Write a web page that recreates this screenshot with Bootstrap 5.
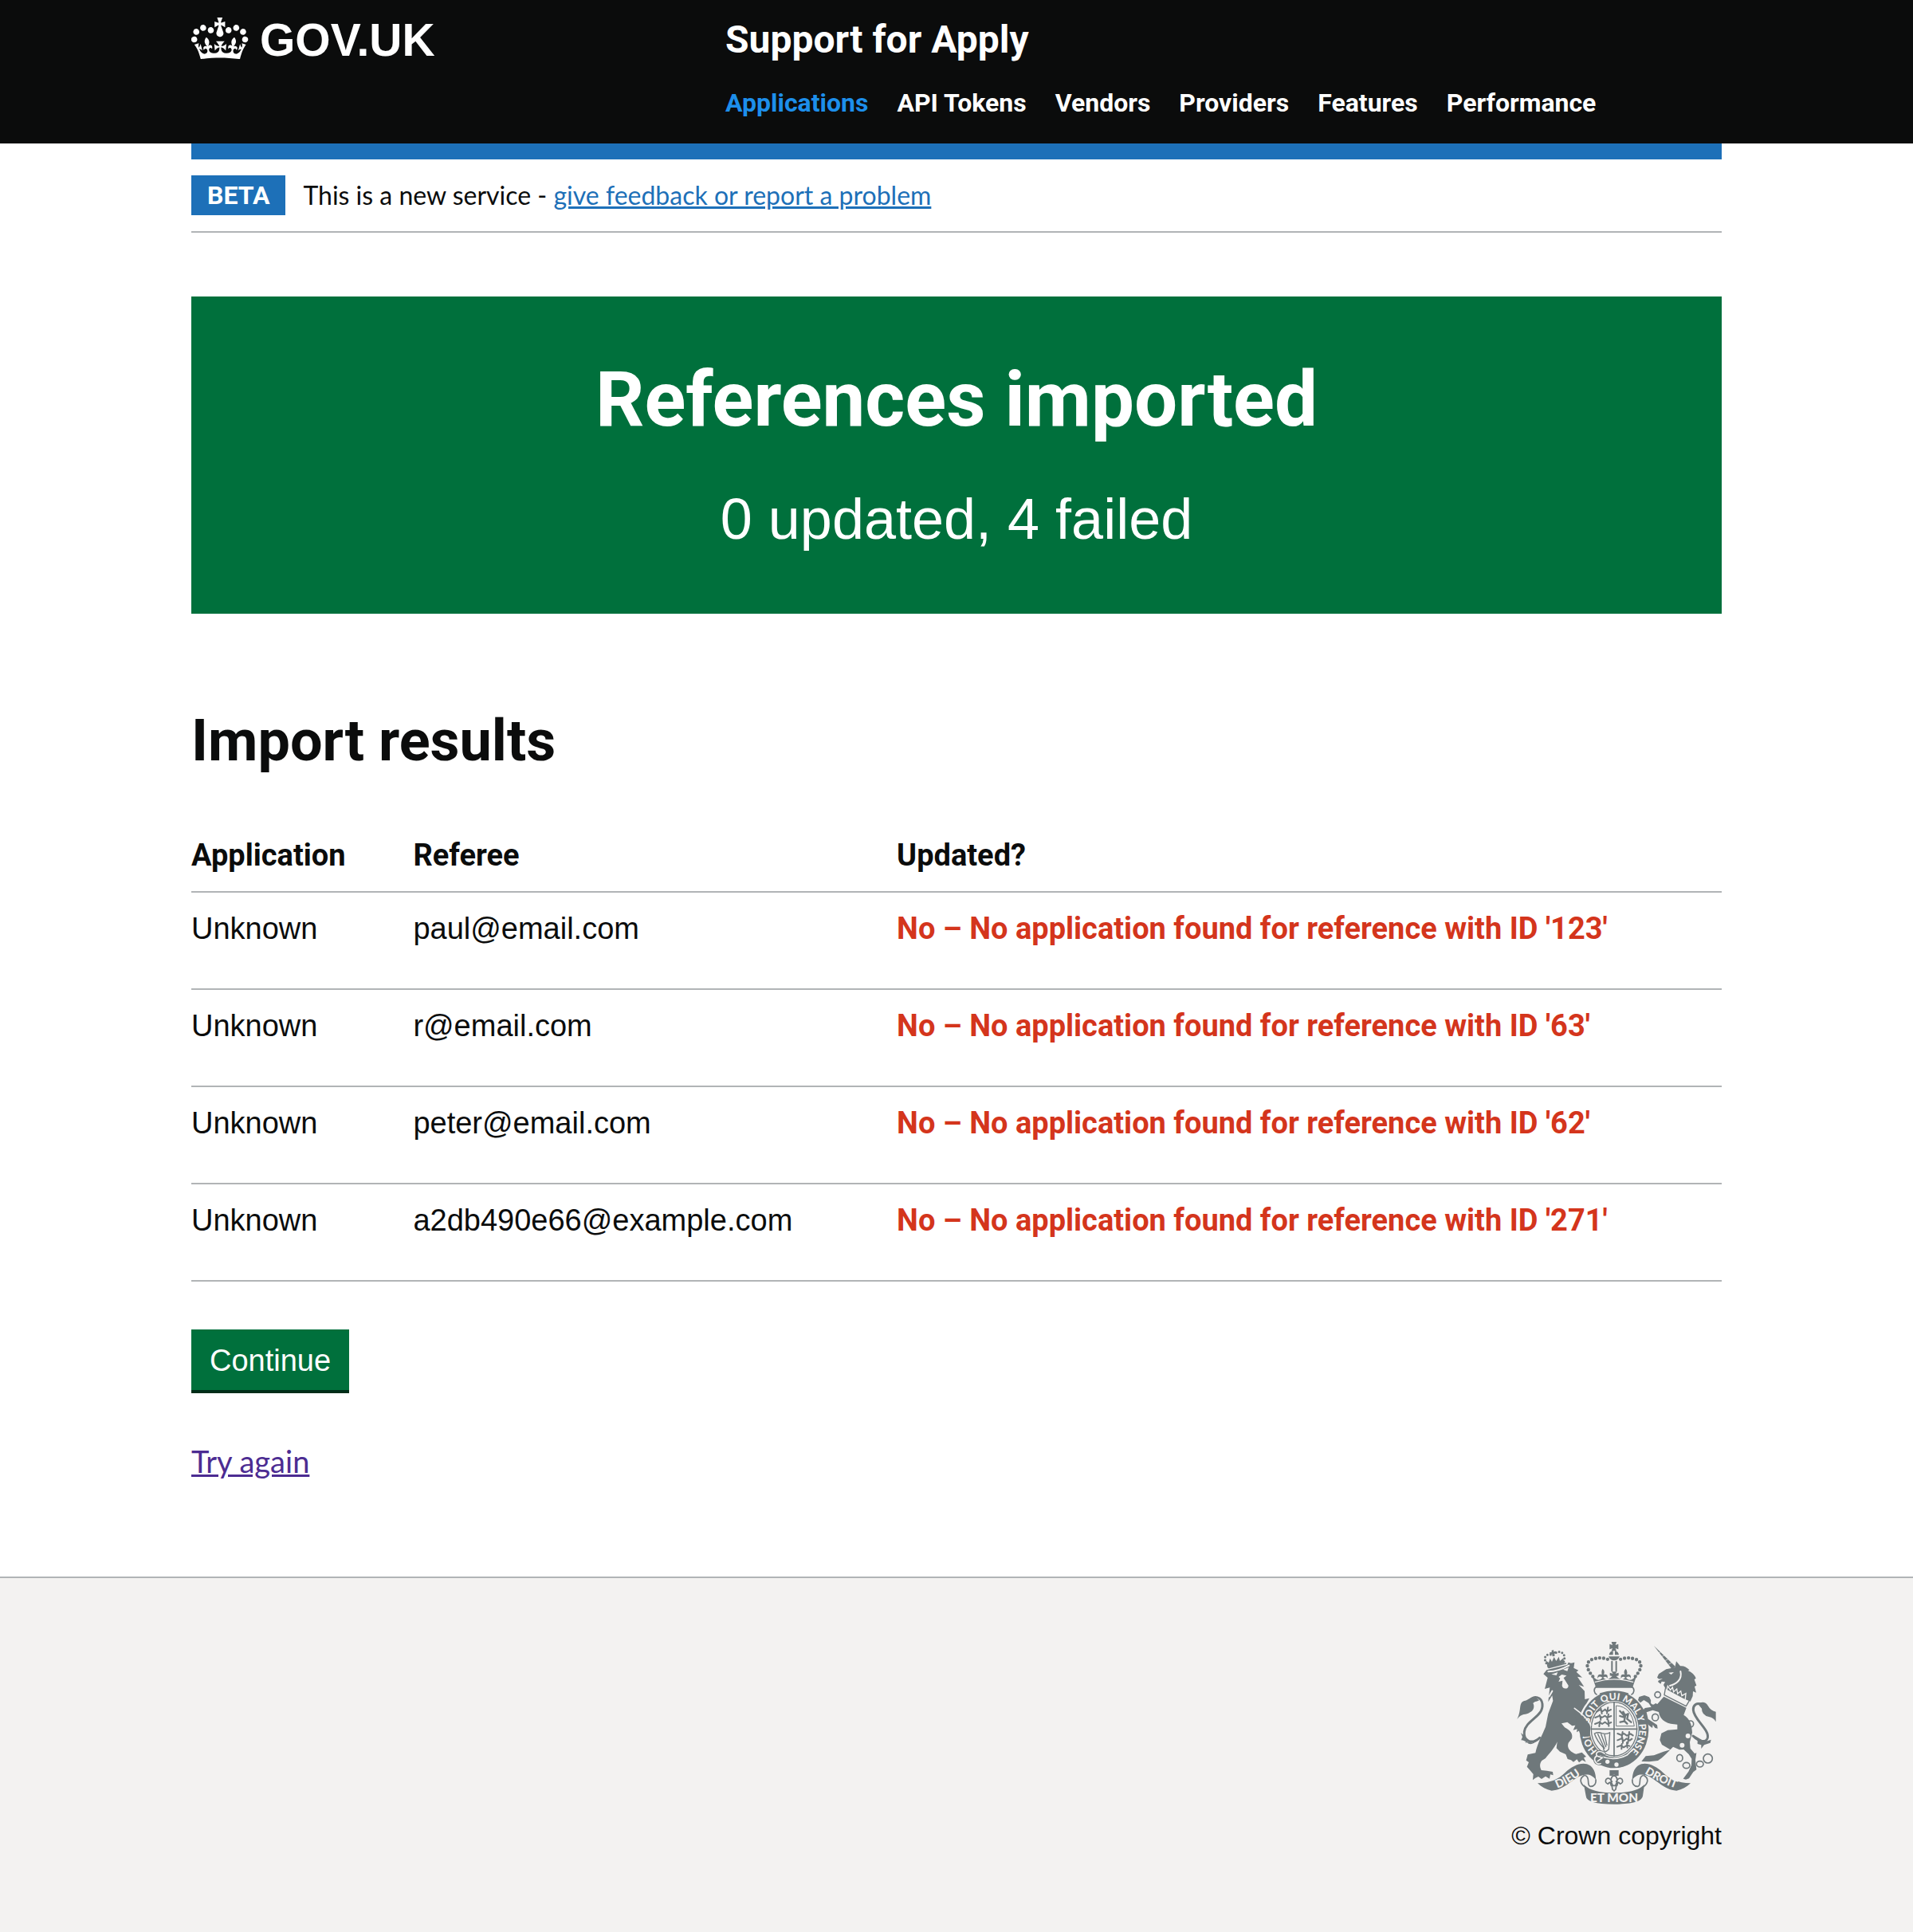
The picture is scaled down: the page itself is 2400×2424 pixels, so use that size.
<!DOCTYPE html>
<html lang="en">
<head>
<meta charset="utf-8">
<meta name="viewport" content="width=device-width, initial-scale=1">
<title>References imported - Support for Apply</title>
<link href="https://cdn.jsdelivr.net/npm/bootstrap@5.3.0/dist/css/bootstrap.min.css" rel="stylesheet">
<style>
  :root { --ink:#0b0c0c; --blue:#1d70b8; --green:#00703c; --line:#b1b4b6; --crest:#6f787b; --paper:#f3f2f1; }
  body { font-family:"Liberation Sans",Arial,sans-serif; font-size:38px; line-height:50px; color:var(--ink); background:#fff; }
  h1, h2, th, .strong-text { font-family:Roboto,"Liberation Sans",sans-serif; font-weight:700; }
  .page-width { width:100%; max-width:1920px; margin-left:auto; margin-right:auto; }
  .site-header { background:var(--ink); padding:22px 0 31px; }
  .brand { gap:14px; color:#fff; font-size:57px; line-height:56px; font-weight:700; }
  .brand svg { width:72px; height:52px; fill:#fff; }
  .service-area { padding-left:30px; }
  .service-name { color:#fff; font-size:48px; line-height:56px; }
  .service-nav { margin-top:31px; column-gap:36px; font-size:32px; line-height:40px; }
  .service-nav a { color:#fff; }
  .service-nav a.active { color:#1d8feb; }
  .phase-banner { border-top:20px solid var(--blue); border-bottom:2px solid var(--line); padding:20px 0; gap:22px; font-family:Lato,"Liberation Sans",sans-serif; font-size:32px; line-height:50px; }
  .phase-tag { background:var(--blue); color:#fff; padding:0 20px; }
  .phase-banner a { color:var(--blue); }
  .result-panel { background:var(--green); margin-top:80px; padding:79px 40px; }
  .result-panel h1 { font-size:96px; line-height:100px; margin-bottom:60px; }
  .result-panel p { font-size:72px; line-height:80px; }
  .results-title { font-size:72px; line-height:80px; margin:120px 0 58px; }
  .results { --bs-table-bg:transparent; --bs-table-color:var(--ink); color:var(--ink); border-color:var(--line); margin-bottom:60px; table-layout:fixed; }
  .results th, .results td { border-bottom:2px solid var(--line); padding:20px 20px 20px 0; }
  .results td { padding-bottom:50px; }
  .results .col-app { width:14.5%; }
  .results .col-ref { width:31.6%; }
  .results td.failed { color:#d4351c; }
  .btn-continue { background:var(--green); color:#fff; border:0; border-radius:0; box-shadow:0 4px 0 #002d18; font-size:38px; line-height:38px; padding:20px 23px 18px; }
  .btn-continue:hover { background:#005a30; color:#fff; }
  .retry { margin:64px 0 120px; font-family:Lato,"Liberation Sans",sans-serif; }
  .retry a { color:#4c2c92; }
  .site-footer { background:var(--paper); border-top:2px solid var(--line); padding:80px 0 96px; }
  .copyright { color:var(--ink); font-size:32px; line-height:50px; gap:14px; }
  .copyright svg { width:250px; height:204px; }
  .crest-fill { fill:var(--crest); }
  .crest-line { fill:none; stroke:var(--crest); stroke-linecap:round; stroke-linejoin:round; }
  .gap-fill { fill:var(--paper); }
  .gap-line { fill:none; stroke:var(--paper); stroke-linecap:round; }
  .motto { fill:var(--paper); font-family:Lato,"Liberation Sans",sans-serif; font-weight:900; }
</style>
</head>
<body class="d-flex flex-column min-vh-100">

<header class="site-header">
  <div class="page-width">
    <div class="row g-0">
      <div class="col-4">
        <a href="#" class="brand d-inline-flex align-items-start text-decoration-none">
          <svg viewBox="0 4 36 26" aria-hidden="true"><path d="M6.7 12.2c1 .4 2.1-.1 2.5-1s-.1-2.1-1-2.5c-1-.4-2.1.1-2.5 1-.4 1 0 2.1 1 2.5m-4.3 2.5c1 .4 2.1-.1 2.5-1s-.1-2.1-1-2.5c-1-.4-2.1.1-2.5 1-.5 1 0 2.1 1 2.5m-1.3 4.8c1 .4 2.1-.1 2.5-1 .4-1-.1-2.1-1-2.5-1-.4-2.1.1-2.5 1-.4 1 0 2.1 1 2.5m10.4-5.8c1 .4 2.1-.1 2.5-1s-.1-2.1-1-2.5c-1-.4-2.1.1-2.5 1s0 2.1 1 2.5m17.4-1.5c-1 .4-2.1-.1-2.5-1s.1-2.1 1-2.5c1-.4 2.1.1 2.5 1 .5 1 0 2.1-1 2.5m4.3 2.5c-1 .4-2.1-.1-2.5-1s.1-2.1 1-2.5c1-.4 2.1.1 2.5 1 .5 1 0 2.1-1 2.5m1.3 4.8c-1 .4-2.1-.1-2.5-1-.4-1 .1-2.1 1-2.5 1-.4 2.1.1 2.5 1 .4 1 0 2.1-1 2.5m-10.4-5.8c-1 .4-2.1-.1-2.5-1s.1-2.1 1-2.5c1-.4 2.1.1 2.5 1s0 2.1-1 2.5m-5.3-4.9 2.4 1.3V6.5l-2.4.8c-.1-.1-.1-.2-.2-.3s1-3 1-3h-3.4l1 3c-.1.1-.2.2-.2.3-.1.1-2.4-.8-2.4-.8v3.6l2.4-1.3c.1.1.1.2.2.3l-1.4 4.2c-.1.2-.1.4-.1.6 0 1.1.8 2 1.9 2.2h.7c1-.2 1.9-1.1 1.9-2.1 0-.2 0-.4-.1-.6l-1.4-4.2c-.1-.1-.1-.2 0-.3m-1 20.3c4.6 0 8.9.3 12.8.9 1.1-4.6 2.4-7.2 3.8-9.1l-2.6-.9c.3 1.3.3 1.9 0 2.8-.4-.4-.8-1.2-1.1-2.4l-1.2 4.2c.8-.5 1.4-.9 2-.9-1.2 2.6-2.7 3.2-3.6 3-1.2-.2-1.7-1.3-1.5-2.2.3-1.3 1.6-1.6 2.2-.1 1.2-2.4-.8-3.1-2.1-2.4 1.9-1.9 2.2-3.6.6-5.7-2.2 1.7-2.2 3.3-1.2 5.6-1.3-1.5-3.3-.7-2.5 1.7.9-1.4 2.1-.5 2 .8-.2 1.2-1.7 2.1-3.7 1.9-2.8-.2-2.9-2.1-2.9-3.6.7-.1 1.9.5 2.9 2l.4-4.3c-1.1 1.1-2.1 1.4-3.2 1.4.4-1.2 2.1-3 2.1-3h-5.4s1.7 1.9 2.1 3c-1.1 0-2.1-.2-3.2-1.4l.4 4.3c1-1.5 2.2-2.1 2.9-2-.1 1.5-.1 3.4-2.9 3.6-1.9.2-3.5-.7-3.7-1.9-.2-1.3 1-2.2 1.9-.8.7-2.4-1.2-3.2-2.4-1.7 1-2.2 1-3.9-1.2-5.6-1.6 2.1-1.3 3.8.6 5.7-1.3-.7-3.2 0-2.1 2.4.6-1.5 1.9-1.1 2.2.1.2.9-.3 1.9-1.5 2.2-1 .2-2.4-.4-3.6-3 .7 0 1.2.3 2 .9l-1.2-4.2c-.3 1.1-.7 1.9-1.1 2.4-.3-.8-.2-1.4 0-2.8l-2.8.9c1.6 1.9 2.9 4.5 4 9.1 3.9-.6 8.2-.9 12.8-.9"/></svg>
          <span>GOV.UK</span>
        </a>
      </div>
      <div class="col-8 service-area">
        <a href="#" class="service-name strong-text d-block text-decoration-none">Support for Apply</a>
        <nav class="service-nav strong-text d-flex flex-wrap" aria-label="Service">
          <a href="#" class="active text-decoration-none" aria-current="page">Applications</a>
          <a href="#" class="text-decoration-none">API Tokens</a>
          <a href="#" class="text-decoration-none">Vendors</a>
          <a href="#" class="text-decoration-none">Providers</a>
          <a href="#" class="text-decoration-none">Features</a>
          <a href="#" class="text-decoration-none">Performance</a>
        </nav>
      </div>
    </div>
  </div>
</header>

<div class="page-width">
  <div class="phase-banner d-flex align-items-center">
    <strong class="phase-tag strong-text">BETA</strong>
    <span>This is a new service - <a href="#">give feedback or report a problem</a></span>
  </div>

  <main>
    <section class="result-panel text-center text-white">
      <h1>References imported</h1>
      <p class="mb-0">0 updated, 4 failed</p>
    </section>

    <h2 class="results-title">Import results</h2>
    <table class="results table">
      <thead>
        <tr><th scope="col" class="col-app">Application</th><th scope="col" class="col-ref">Referee</th><th scope="col">Updated?</th></tr>
      </thead>
      <tbody>
        <tr><td>Unknown</td><td>paul@email.com</td><td class="failed strong-text">No – No application found for reference with ID '123'</td></tr>
        <tr><td>Unknown</td><td>r@email.com</td><td class="failed strong-text">No – No application found for reference with ID '63'</td></tr>
        <tr><td>Unknown</td><td>peter@email.com</td><td class="failed strong-text">No – No application found for reference with ID '62'</td></tr>
        <tr><td>Unknown</td><td>a2db490e66@example.com</td><td class="failed strong-text">No – No application found for reference with ID '271'</td></tr>
      </tbody>
    </table>

    <button type="button" class="btn btn-continue d-block">Continue</button>
    <p class="retry"><a href="#">Try again</a></p>
  </main>
</div>

<footer class="site-footer flex-grow-1">
  <div class="page-width d-flex justify-content-end">
    <a href="#" class="copyright d-flex flex-column align-items-center text-decoration-none">
      <svg viewBox="72 60 750 612" role="img" aria-label="Royal coat of arms">
        <defs>
          <path id="garter" d="M371 466A95 110 0 1 1 463 494"/>
          <path id="scrollLeft" d="M210 616Q270 596 324 551"/>
          <path id="scrollRight" d="M545 550Q606 590 678 614"/>
        </defs>

        <!-- lion: crown, head and mane, body, legs -->
        <path class="crest-line" stroke-width="9" stroke-dasharray="0 12" d="M190 150C166 122 180 100 207 110C230 84 262 102 248 136"/>
        <path class="crest-fill" d="M203 92l8-2-1 7 8-2 2 8-8 1 3 9-9 2-1-9-8 1-2-7 8-1zM188 152l-8-22 12 8 5-16 7 13 8-18 8 15 10-16 4 16 13-11 3 20-62 17z"/>
        <path class="crest-line" stroke-width="5" d="M192 157L256 141"/>
        <path class="crest-fill" d="M184 166L262 146 266 137 276 140 289 137 286 158 304 167 296 173 318 194 300 191 325 229 305 222 327 245 328 276 345 272 334 292C324 303 317 318 310 334L290 308 318 346C340 360 350 378 349 404L341 409 345 416 331 413 325 418 318 404 309 405 309 393 297 400 299 388 284 392 292 374 280 376 262 362 240 367 252 382C274 393 284 407 279 424L266 440C258 462 278 476 295 482L317 476 333 492 324 496 332 512 318 505 306 514 298 502 285 512 276 505 263 501 256 483 234 473 221 460 224 436C213 462 193 481 180 498L166 507C156 520 159 532 164 543L185 545 207 549 209 562 198 559 195 575 180 566 165 576 153 567 142 572 132 580 134 558 122 544 110 530 117 513 107 506 113 484 142 478C150 440 165 416 180 380L190 330 208 282 205 262 190 286 196 232 177 237 188 195 172 181Z"/>
        <path class="gap-fill" d="M202 182l24-8-5 12zM246 164l21-8-5 14zM229 192l12-9 18 4-11 9 18 28c1 15-21 16-24 1l2-19-15 4 6-13z"/>
        <path class="gap-line" stroke-width="6" d="M190 172Q228 171 268 149M205 245L194 265"/>
        <path class="crest-line" stroke-width="9" d="M158 421C128 448 96 434 100 398C106 354 173 342 168 294C165 265 137 263 123 278"/>
        <path class="crest-line" stroke-width="4" d="M150 426C124 456 112 438 96 427"/>
        <path class="crest-fill" d="M146 272C125 260 115 281 100 282C77 290 91 315 73 351C90 327 106 337 122 325C137 317 139 301 133 291C139 283 151 285 156 279ZM93 418l-6-16 13 12 17 18-14 10 6-10-21-2zM113 440l32-12-27 16z"/>

        <!-- crown above the shield -->
        <path class="crest-line" stroke-width="13" stroke-dasharray="0 15.2" d="M358 190C328 155 332 132 362 124C387 116 407 122 424 130M518 190C548 155 544 132 514 124C489 116 469 122 452 130"/>
        <path class="crest-fill" d="M428 60h19l-4 12 11-4v20l-11-4 4 10h-19l4-10-11 4V68l11 4zM419 109q2-13 15-15v15zM441 94q13 2 15 15h-15zM417 115h42q-6 15-21 15t-21-15z"/>
        <path class="crest-line" stroke-width="6" d="M430 134v35M446 134v35"/>
        <path class="crest-fill" d="M352 180l12 16q18 16 30-2-15-9-18 4-2-20 16-15-3-14 3-22 10 9 4 22 17-4 14 14-5-10-16-3 13 17 34-5l-9-2v-11l12 4-6-8h21l-6 8 12-4v11l-9 2q21 22 34 5-11-7-16 3-3-18 14-14-6-13 4-22 8 10 4 22 17-5 15 15-3-13-18-4 12 18 30 2l12-16-18 53H370z"/>
        <path class="gap-line" stroke-width="4" d="M367 211Q438 190 509 211"/>
        <path class="crest-line" stroke-width="5" d="M372 228C357 238 365 255 372 258M504 228C519 238 511 255 504 258M372 229Q438 211 504 229M386 255Q438 238 490 255"/>

        <!-- garter and its motto -->
        <ellipse class="crest-fill" cx="438" cy="390" rx="130" ry="145"/>
        <ellipse class="gap-fill" cx="438" cy="388" rx="92" ry="106"/>
        <ellipse class="crest-line" stroke-width="4" cx="438" cy="388" rx="86" ry="101"/>
        <g class="motto" font-size="36" text-anchor="middle">
          <text><textPath href="#garter" startOffset="36">HON</textPath></text>
          <text><textPath href="#garter" startOffset="147">SOIT</textPath></text>
          <text><textPath href="#garter" startOffset="232">QUI</textPath></text>
          <text><textPath href="#garter" startOffset="314">MAL</textPath></text>
          <text><textPath href="#garter" startOffset="370">Y</textPath></text>
          <text><textPath href="#garter" startOffset="444">PENSE</textPath></text>
        </g>
        <path class="crest-line" stroke-width="5" d="M438 287v203M352 388h172"/>
        <path class="crest-line" stroke-width="6" d="M372 323l14-8 8 7 10-8 7 8 15-7M388 310l4 20M415 307l-4 22M367 345l17-7 8 7 12-7 8 7 15-6M384 335l4 18M417 332l-5 20M366 369l18-7 9 7 11-7 9 7 14-6M385 359l-3 19M416 355l2 22"/>
        <path class="crest-line" stroke-width="3" d="M447 300Q504 304 514 377H447Z"/>
        <path class="crest-line" stroke-width="7" d="M460 320l16 18 15-7-4 19 15 12M461 362l15-3 4-21-8-15M477 358l10 10M460 339l13 4"/>
        <path class="crest-line" stroke-width="6" d="M451 405l15 6 9-6 11 8 14-7 9 6M470 399l-3 20M495 399l-3 23M451 430l14-6 10 8 10-8 12 7 8-6M469 420l2 20M493 419l-3 22M450 455l14-5 10 7 13-8 9 3M467 444l-1 19M486 439l2 19"/>
        <path class="crest-line" stroke-width="4" d="M364 405Q378 398 392 404Q412 409 422 401L418 464Q399 484 398 458Q374 434 364 405ZM377 407l25 54M389 407l18 48M402 409l9 40"/>
        <path class="crest-fill" d="M376 481Q413 505 440 498L515 493L495 518Q440 551 376 515Z"/>
        <path class="gap-line" stroke-width="5" d="M385 489Q438 512 488 485L508 465"/>
        <circle class="gap-fill" cx="413" cy="511" r="8"/><circle class="gap-fill" cx="447" cy="522" r="8"/>
        <path class="crest-line" stroke-width="11" d="M402 480C380 464 366 478 373 489C356 499 369 524 387 518M372 489l22 7-18 13"/>
        <path class="gap-line" stroke-width="5" d="M402 480C380 464 366 478 373 489C356 499 369 524 387 518M372 489l22 7-18 13"/>

        <!-- lion's forepaw crossing the garter -->
        <path class="crest-fill" d="M286 306L330 352 349 380 347 408 341 409 345 416 325 418 309 405 297 365Z"/>
        <path class="gap-line" stroke-width="5" d="M289 310Q337 344 350 373"/>

        <!-- unicorn -->
        <path class="crest-fill" d="M588 75L669 153 656 163Z"/>
        <path class="gap-line" stroke-width="2" d="M606 101l8-3M618 115l8-4M631 130l9-4M644 144l9-5"/>
        <path class="crest-fill" d="M667 156L672 133 687 151Q704 148 722 166L716 168Q738 177 746 197L740 202 748 224 741 228 747 251 735 246 734 264 725 284 699 273 632 237 624 222 630 211 617 209 613 218 603 210 608 201 600 194 606 181 634 163Z"/>
        <path class="gap-fill" d="M643 176l20-2-10 9zM600 201l21-3-13 7z"/>
        <path class="gap-line" stroke-width="6" d="M688 171Q693 193 680 207Q668 220 648 225"/>
        <path class="gap-line" stroke-width="4" d="M636 242l4-16 10 15 8-10 4 17 12-11 3 18 12-10 4 18 15-9-2 21"/>
        <path class="crest-line" stroke-width="4" d="M631 236L627 260 709 302 720 283"/>
        <path class="crest-fill" d="M625 266L710 308 700 335C725 351 730 371 732 401L723 437 725 461 741 480 748 478 744 505 748 541 736 550 720 574 708 578 698 575 718 548 729 524 730 500 719 483 700 465 684 466 660 455C640 476 621 495 603 507L570 511 541 510 557 490 588 487 624 473 650 466 618 447 610 429 616 404 640 392 676 389 676 371C642 370 611 359 606 324L583 317 560 325 566 350 600 373 602 386 592 384 584 372 582 384 570 375 552 352 544 320 554 309 578 305 568 290 550 279 537 289 528 279 532 267 552 261 570 268 580 286 601 294Z"/>
        <g class="gap-fill"><ellipse cx="585" cy="286" rx="9" ry="10"/><ellipse cx="716" cy="414" rx="9" ry="9"/><ellipse cx="694" cy="449" rx="9" ry="9"/></g>
        <g class="crest-line" stroke-width="5">
          <ellipse cx="602" cy="259" rx="11" ry="11"/><ellipse cx="593" cy="344" rx="12" ry="13"/>
          <ellipse cx="725" cy="369" rx="12" ry="12"/><ellipse cx="685" cy="497" rx="11" ry="13"/>
          <ellipse cx="710" cy="525" rx="13" ry="11"/><ellipse cx="761" cy="520" rx="13" ry="11"/><circle cx="791" cy="499" r="17"/>
        </g>
        <path class="crest-line" stroke-width="9" d="M735 414C755 434 783 443 790 421C797 390 738 352 736 316C735 298 750 287 767 295"/>
        <path class="crest-fill" d="M753 293Q778 279 791 300Q802 320 821 323L821 361Q812 344 795 342Q767 335 768 311ZM738 411L752 433 752 444 766 448 766 462 777 448 800 440 803 428 780 436Z"/>

        <!-- motto scroll -->
        <path class="crest-fill" d="M150 592C200 590 227 578 254 552C283 524 322 508 348 526C365 539 369 560 370 580C354 559 337 557 320 562C286 570 251 619 203 620C183 616 164 606 150 592Z"/>
        <path class="crest-fill" d="M726 592C676 590 649 578 622 552C593 524 554 508 528 526C511 539 507 560 506 580C522 559 539 557 556 562C590 570 625 619 673 620C693 616 712 606 726 592Z"/>
        <path class="crest-line" stroke-width="5" d="M325 563C302 577 315 599 331 607M330 563C350 570 333 598 348 604C364 605 371 592 369 579M551 563C574 577 561 599 545 607M546 563C526 570 543 598 528 604C512 605 505 592 507 579"/>
        <path class="crest-fill" d="M324 597Q353 628 438 628T552 597L546 640Q543 671 438 671T332 640Z"/>
        <g class="motto" font-size="43" text-anchor="middle">
          <text><textPath href="#scrollLeft" startOffset="50%">DIEU</textPath></text>
          <text font-size="42"><textPath href="#scrollRight" startOffset="50%">DROIT</textPath></text>
          <text x="438" y="664" font-size="46">ET MON</text>
        </g>

        <!-- fleur-de-lis badge -->
        <path class="crest-fill" d="M421 543h34v21h-11l-6-7-7 7h-10z"/>
        <path class="crest-line" stroke-width="5" d="M438 561Q418 575 432 598M438 561Q458 575 444 598M430 586Q421 567 408 577Q402 590 415 595Q419 588 423 589L427 601H449L453 589Q457 588 461 595Q474 590 468 577Q455 567 446 586M430 603L432 615 438 621 444 615 446 603"/>
      </svg>
      <span>© Crown copyright</span>
    </a>
  </div>
</footer>

<script src="https://cdn.jsdelivr.net/npm/bootstrap@5.3.0/dist/js/bootstrap.bundle.min.js"></script>
</body>
</html>
